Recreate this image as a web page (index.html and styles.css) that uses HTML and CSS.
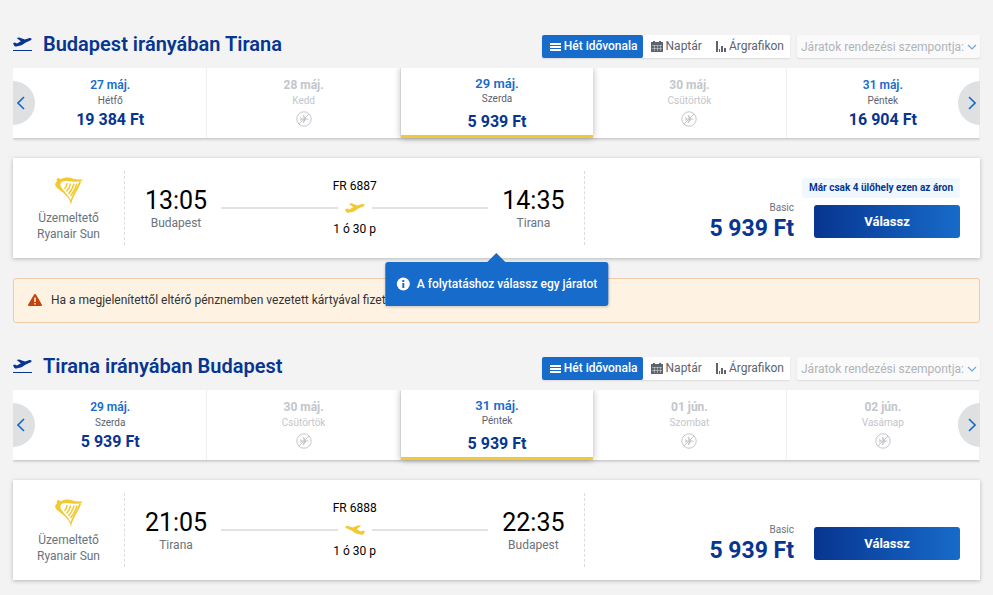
FILE: index.html
```html
<!DOCTYPE html>
<html lang="hu">
<head>
  <meta charset="UTF-8">
  <meta name="viewport" content="width=device-width, initial-scale=1">
  <title>Járatok</title>
  <link rel="stylesheet" href="styles.css">
</head>
<body>

  <!-- Shared icons -->
  <svg class="sprite" aria-hidden="true">
    <symbol id="plane" viewBox="0 0 20 10">
      <path d="M0 6.200 2 5.500l2.200 1L8.300 4.300 3.800.8 6.500.2l6 2.200L16 1.200c1.500-.5 3-.4 3.500.3.4.8-.4 1.600-1.500 2l-5 2.200-4 2.700-4.500 1.200c-1.500.4-2.800.3-3.300-.8z"/>
    </symbol>
    <symbol id="takeoff" viewBox="0 0 20 16">
      <use href="#plane" width="19" height="10" y="1"/>
      <path d="M0 14h19v1H0z"/>
    </symbol>
    <symbol id="harp" viewBox="0 0 28 28">
      <path d="M2 4.500C1 2.500 2.500.8 4 1l1.300 1.200C9 .6 13-.1 17 1.200c4 1.400 7.500 1.600 11 1.300-1 1.300-2.500 1.800-4 2.100-5 .8-8.500-.5-12-.6C8 3.900 5.500 5 5.300 7.500c-.1 4 7.700 9.500 10.200 15.500C17.700 17 22 11 24.300 4.500h1.900C23.500 13 17.500 19 16 28c-.5-4-2.500-7-6-10.500C5.500 13-.6 10.500.2 7c.3-1.200.8-1.700 1.800-2.500z"/>
      <path d="M12 6q0 3-2.500 6M15.500 6.500q-.5 4-4 8M19 6.500q-1 5-5.500 10.500M22 6.500Q20.500 13 15.500 19" fill="none" stroke="currentColor" stroke-width="1.500"/>
    </symbol>
    <symbol id="no-flight" viewBox="0 0 16 16">
      <circle cx="8" cy="8" r="7.200" fill="none" stroke="currentColor"/>
      <path d="M3 13 13 3" fill="none" stroke="currentColor"/>
      <path d="M4 6.200h.9l1 1.200h1.900L6.700 4h1.100l2.300 3.400h1.700c1 0 1 1.200 0 1.200h-1.700L7.800 12H6.700l1.100-3.400H5.900l-1 1.200H4L4.600 8z"/>
    </symbol>
    <symbol id="chevron-left" viewBox="0 0 8 14"><path d="M7 1 1 7l6 6" fill="none" stroke="currentColor" stroke-width="1.600"/></symbol>
    <symbol id="chevron-right" viewBox="0 0 8 14"><path d="m1 1 6 6-6 6" fill="none" stroke="currentColor" stroke-width="1.600"/></symbol>
    <symbol id="chevron-down" viewBox="0 0 10 6"><path d="m1 1 4 4 4-4" fill="none" stroke="currentColor" stroke-width="1.200"/></symbol>
    <symbol id="rows" viewBox="0 0 12 11"><path d="M1 2h11v2H1zM1 5h11v2H1zM1 8h11v2H1z"/></symbol>
    <symbol id="calendar" viewBox="0 0 12 11">
      <path d="M0 1h2V0h2v1h4V0h2v1h2v3H0zM0 4h12v7H0z"/>
      <path d="M1 4.500h10M1 7.500h10M3.500 4v6M6.500 4v6M9.500 4v6" fill="none" stroke="#fff" stroke-width=".4"/>
    </symbol>
    <symbol id="bars" viewBox="0 0 10 11"><path d="M0 0h2v11H0zM3 8h1v3H3zM5 5h2v6H5zM8 7h2v4H8z"/></symbol>
  </svg>

  <main class="page">

    <!-- Outbound flight -->
    <section class="journey">
      <header class="journey-header">
        <h2 class="journey-title"><svg class="title-icon"><use href="#takeoff"/></svg>Budapest irányában Tirana</h2>
        <div class="view-tabs">
          <button class="tab tab-active" type="button"><svg class="tab-icon"><use href="#rows"/></svg>Hét idővonala</button>
          <button class="tab" type="button"><svg class="tab-icon"><use href="#calendar"/></svg>Naptár</button>
          <button class="tab" type="button"><svg class="tab-icon tab-icon-bars"><use href="#bars"/></svg>Árgrafikon</button>
        </div>
        <div class="sort">
          <select class="sort-select" aria-label="Járatok rendezési szempontja">
            <option>Járatok rendezési szempontja:</option>
          </select>
          <svg class="sort-icon"><use href="#chevron-down"/></svg>
        </div>
      </header>

      <div class="timeline">
        <button class="arrow arrow-prev" type="button" aria-label="Előző"><svg class="arrow-icon"><use href="#chevron-left"/></svg></button>
        <button class="day" type="button">
          <span class="day-date">27 máj.</span>
          <span class="day-name">Hétfő</span>
          <span class="day-price">19 384 Ft</span>
        </button>
        <button class="day day-disabled" type="button" disabled>
          <span class="day-date">28 máj.</span>
          <span class="day-name">Kedd</span>
          <svg class="day-icon"><use href="#no-flight"/></svg>
        </button>
        <button class="day day-selected" type="button">
          <span class="day-date">29 máj.</span>
          <span class="day-name">Szerda</span>
          <span class="day-price">5 939 Ft</span>
        </button>
        <button class="day day-disabled" type="button" disabled>
          <span class="day-date">30 máj.</span>
          <span class="day-name">Csütörtök</span>
          <svg class="day-icon"><use href="#no-flight"/></svg>
        </button>
        <button class="day" type="button">
          <span class="day-date">31 máj.</span>
          <span class="day-name">Péntek</span>
          <span class="day-price">16 904 Ft</span>
        </button>
        <button class="arrow arrow-next" type="button" aria-label="Következő"><svg class="arrow-icon"><use href="#chevron-right"/></svg></button>
      </div>

      <article class="flight">
        <div class="operator">
          <svg class="harp"><use href="#harp"/></svg>
          <span>Üzemeltető</span>
          <span>Ryanair Sun</span>
        </div>
        <div class="route">
          <div class="stop">
            <span class="stop-time">13:05</span>
            <span class="stop-city">Budapest</span>
          </div>
          <div class="leg">
            <span>FR 6887</span>
            <div class="leg-line"><svg class="leg-plane"><use href="#plane"/></svg></div>
            <span>1 ó 30 p</span>
          </div>
          <div class="stop">
            <span class="stop-time">14:35</span>
            <span class="stop-city">Tirana</span>
          </div>
        </div>
        <div class="offer">
          <div class="fare">
            <span class="fare-name">Basic</span>
            <span class="fare-price">5 939 Ft</span>
          </div>
          <div class="offer-action">
            <span class="seats-left">Már csak 4 ülőhely ezen az áron</span>
            <button class="select-button" type="button">Válassz</button>
          </div>
        </div>
        <div class="tooltip" role="tooltip">
          <svg class="tooltip-icon" viewBox="0 0 14 14"><circle cx="7" cy="7" r="6.500" fill="#fff"/><path d="M6 3h2v2H6zM6 6h2v5H6z" fill="#176bca"/></svg>
          A folytatáshoz válassz egy járatot
        </div>
      </article>

      <div class="warning">
        <svg class="warning-icon" viewBox="0 0 14 12"><path d="M7 0c.5 0 .8.2 1 .6l5.800 10c.4.8 0 1.400-.8 1.400H1c-.8 0-1.200-.6-.8-1.400l5.800-10C6.200.2 6.500 0 7 0z" fill="#c1440c"/><path d="M6.300 3.500h1.400v4.500H6.300zM6.300 9h1.400v1.400H6.300z" fill="#fff"/></svg>
        Ha a megjelenítettől eltérő pénznemben vezetett kártyával fizet, a
      </div>
    </section>

    <!-- Return flight -->
    <section class="journey">
      <header class="journey-header">
        <h2 class="journey-title"><svg class="title-icon"><use href="#takeoff"/></svg>Tirana irányában Budapest</h2>
        <div class="view-tabs">
          <button class="tab tab-active" type="button"><svg class="tab-icon"><use href="#rows"/></svg>Hét idővonala</button>
          <button class="tab" type="button"><svg class="tab-icon"><use href="#calendar"/></svg>Naptár</button>
          <button class="tab" type="button"><svg class="tab-icon tab-icon-bars"><use href="#bars"/></svg>Árgrafikon</button>
        </div>
        <div class="sort">
          <select class="sort-select" aria-label="Járatok rendezési szempontja">
            <option>Járatok rendezési szempontja:</option>
          </select>
          <svg class="sort-icon"><use href="#chevron-down"/></svg>
        </div>
      </header>

      <div class="timeline">
        <button class="arrow arrow-prev" type="button" aria-label="Előző"><svg class="arrow-icon"><use href="#chevron-left"/></svg></button>
        <button class="day" type="button">
          <span class="day-date">29 máj.</span>
          <span class="day-name">Szerda</span>
          <span class="day-price">5 939 Ft</span>
        </button>
        <button class="day day-disabled" type="button" disabled>
          <span class="day-date">30 máj.</span>
          <span class="day-name">Csütörtök</span>
          <svg class="day-icon"><use href="#no-flight"/></svg>
        </button>
        <button class="day day-selected" type="button">
          <span class="day-date">31 máj.</span>
          <span class="day-name">Péntek</span>
          <span class="day-price">5 939 Ft</span>
        </button>
        <button class="day day-disabled" type="button" disabled>
          <span class="day-date">01 jún.</span>
          <span class="day-name">Szombat</span>
          <svg class="day-icon"><use href="#no-flight"/></svg>
        </button>
        <button class="day day-disabled" type="button" disabled>
          <span class="day-date">02 jún.</span>
          <span class="day-name">Vasárnap</span>
          <svg class="day-icon"><use href="#no-flight"/></svg>
        </button>
        <button class="arrow arrow-next" type="button" aria-label="Következő"><svg class="arrow-icon"><use href="#chevron-right"/></svg></button>
      </div>

      <article class="flight">
        <div class="operator">
          <svg class="harp"><use href="#harp"/></svg>
          <span>Üzemeltető</span>
          <span>Ryanair Sun</span>
        </div>
        <div class="route">
          <div class="stop">
            <span class="stop-time">21:05</span>
            <span class="stop-city">Tirana</span>
          </div>
          <div class="leg">
            <span>FR 6888</span>
            <div class="leg-line"><svg class="leg-plane leg-plane-back"><use href="#plane"/></svg></div>
            <span>1 ó 30 p</span>
          </div>
          <div class="stop">
            <span class="stop-time">22:35</span>
            <span class="stop-city">Budapest</span>
          </div>
        </div>
        <div class="offer">
          <div class="fare">
            <span class="fare-name">Basic</span>
            <span class="fare-price">5 939 Ft</span>
          </div>
          <div class="offer-action">
            <button class="select-button" type="button">Válassz</button>
          </div>
        </div>
      </article>
    </section>

  </main>
</body>
</html>
```

FILE: styles.css
```css
* {
  box-sizing: border-box;
}

body {
  margin: 0;
  background-color: #f3f3f3;
  color: #000;
  font-family: Roboto, "Liberation Sans", sans-serif;
  font-size: 12px;
  line-height: 16px;
}

button, select {
  font-family: inherit;
  border: 0;
  cursor: pointer;
}

svg {
  flex: none;
  fill: currentColor;
}

.sprite {
  position: absolute;
  width: 0;
  height: 0;
}

.page {
  display: flex;
  flex-direction: column;
  gap: 19px;
  padding: 20px 13px 14px;
}

/* Title, view tabs and sorting */
.journey-header {
  display: flex;
  align-items: center;
  height: 48px;
  padding-top: 5px;
}

.journey-title {
  display: flex;
  align-items: center;
  gap: 10px;
  flex: 1;
  margin: 0 0 5px;
  color: #073590;
  font-size: 20px;
  font-weight: 600;
  line-height: 24px;
}

.title-icon {
  width: 20px;
  height: 16px;
}

.view-tabs {
  display: flex;
  border-radius: 2px;
  box-shadow: 0 1px 2px rgba(0, 0, 0, 0.1);
}

.tab {
  display: flex;
  align-items: center;
  gap: 3px;
  height: 23px;
  padding: 0 6px 1px 8px;
  background-color: #fff;
  color: #5d6470;
  font-size: 12px;
}

.tab-active {
  padding: 0 5px 1px 7px;
  background-color: #176bca;
  color: #fff;
  font-weight: 500;
  border-radius: 2px;
}

.tab-icon {
  width: 12px;
  height: 11px;
}

.tab-icon-bars {
  width: 10px;
}

.sort {
  position: relative;
  margin-left: 7px;
}

.sort-select {
  display: block;
  appearance: none;
  width: 183px;
  height: 23px;
  padding: 0 4px;
  background-color: #fafafa;
  color: #b1b4b9;
  font-size: 12px;
  border-radius: 2px;
  box-shadow: 0 1px 2px rgba(0, 0, 0, 0.1);
}

.sort-icon {
  position: absolute;
  top: 9px;
  right: 3px;
  width: 10px;
  height: 6px;
  color: #6fa8e0;
  pointer-events: none;
}

/* Week timeline */
.timeline {
  position: relative;
  display: flex;
  height: 70px;
  padding-left: 1px;
  background-color: #fff;
  box-shadow: 0 1px 3px rgba(0, 0, 0, 0.25);
  clip-path: inset(0 0 -6px 0);
}

.day {
  display: flex;
  flex: 1;
  flex-direction: column;
  align-items: center;
  padding: 9px 0 0;
  background-color: #fff;
  border-right: 1px solid #f0f0f0;
}

.day-date {
  color: #176bca;
  font-size: 12px;
  font-weight: 600;
  line-height: 16px;
}

.day-name {
  color: #5d6470;
  font-size: 10px;
  line-height: 16px;
}

.day-price {
  color: #073590;
  font-size: 16px;
  font-weight: 700;
  line-height: 22px;
}

.day-icon {
  width: 16px;
  height: 16px;
  margin-top: 2px;
}

.day-disabled,
.day-disabled .day-date,
.day-disabled .day-name {
  color: #c3c6ca;
}

.day-disabled .day-date {
  font-weight: 700;
}

.day-selected {
  position: relative;
  z-index: 1;
  padding-top: 8px;
  border-right: 0;
  border-bottom: 3px solid #f1c933;
  box-shadow: 0 0 7px rgba(0, 0, 0, 0.3);
}

.day-selected .day-date {
  font-size: 13px;
}

.day-selected .day-name {
  line-height: 14px;
}

.day-selected .day-price {
  margin-top: 5px;
}

.arrow {
  position: absolute;
  z-index: 2;
  top: 13px;
  display: flex;
  align-items: center;
  width: 22px;
  height: 44px;
  padding: 0 4px;
  background-color: #dfe0e2;
  color: #176bca;
}

.arrow-prev {
  left: 0;
  border-radius: 0 22px 22px 0;
}

.arrow-next {
  right: 0;
  justify-content: flex-end;
  border-radius: 22px 0 0 22px;
}

.arrow-icon {
  width: 8px;
  height: 14px;
}

/* Flight card */
.flight {
  position: relative;
  display: grid;
  grid-template-columns: 112px 7fr 6fr;
  height: 100px;
  margin-top: 20px;
  background-color: #fff;
  box-shadow: 0 1px 4px rgba(0, 0, 0, 0.25);
}

.operator,
.route {
  margin: 13px 0;
  border-right: 1px dashed #dcdcdc;
}

.operator {
  display: flex;
  flex-direction: column;
  align-items: center;
  padding-top: 6px;
  color: #6c727c;
}

.harp {
  width: 28px;
  height: 28px;
  margin-bottom: 5px;
  color: #f1c933;
}

.route {
  display: flex;
  gap: 14px;
  padding: 0 20px;
}

.stop {
  display: flex;
  flex-direction: column;
  align-items: center;
  width: 62px;
  padding-top: 16px;
}

.stop-time {
  font-size: 25px;
  line-height: 28px;
}

.stop-city {
  color: #6c727c;
}

.leg {
  display: flex;
  flex: 1;
  flex-direction: column;
  align-items: center;
  padding-top: 7px;
}

.leg-line {
  display: flex;
  align-items: center;
  gap: 7px;
  align-self: stretch;
  height: 27px;
}

.leg-line::before,
.leg-line::after {
  content: "";
  flex: 1;
  height: 2px;
  background-color: #e2e2e2;
}

.leg-plane {
  width: 20px;
  height: 10px;
  color: #f1c933;
}

.leg-plane-back {
  transform: scaleX(-1);
}

.offer {
  display: flex;
  align-items: flex-end;
  justify-content: flex-end;
  gap: 20px;
  padding: 0 20px 20px;
}

.fare {
  display: flex;
  flex-direction: column;
  align-items: flex-end;
}

.fare-name {
  color: #6c727c;
  font-size: 10px;
  line-height: 12px;
}

.fare-price {
  color: #073590;
  font-size: 23px;
  font-weight: 700;
  line-height: 30px;
  margin-bottom: -6px;
}

.offer-action {
  display: flex;
  flex-direction: column;
  align-items: flex-end;
  gap: 7px;
  width: 146px;
}

.seats-left {
  padding: 2px 7px;
  background-color: #f1f8fd;
  color: #073590;
  font-size: 10px;
  font-weight: 700;
  white-space: nowrap;
  border-radius: 3px;
}

.select-button {
  width: 100%;
  height: 33px;
  background: linear-gradient(90deg, #073590, #176bca);
  color: #fff;
  font-size: 13px;
  font-weight: 700;
  border-radius: 3px;
}

/* Hint under the first card */
.tooltip {
  position: absolute;
  z-index: 3;
  top: 104px;
  left: 50%;
  display: flex;
  align-items: center;
  gap: 7px;
  height: 44px;
  padding: 0 11px;
  background-color: #176bca;
  color: #fff;
  font-weight: 500;
  white-space: nowrap;
  border-radius: 3px;
  box-shadow: 0 1px 3px rgba(0, 0, 0, 0.2);
  transform: translateX(-50%);
}

.tooltip::before {
  content: "";
  position: absolute;
  bottom: 100%;
  left: 50%;
  margin-left: -9px;
  border: 9px solid transparent;
  border-top: 0;
  border-bottom-color: #176bca;
}

.tooltip-icon {
  width: 14px;
  height: 14px;
}

/* Currency warning */
.warning {
  display: flex;
  align-items: center;
  gap: 9px;
  height: 45px;
  margin-top: 20px;
  padding: 0 14px 2px;
  background-color: #fef3e2;
  color: #333;
  border: 1px solid #f1cba8;
  border-radius: 3px;
}

.warning-icon {
  width: 14px;
  height: 12px;
}
```
